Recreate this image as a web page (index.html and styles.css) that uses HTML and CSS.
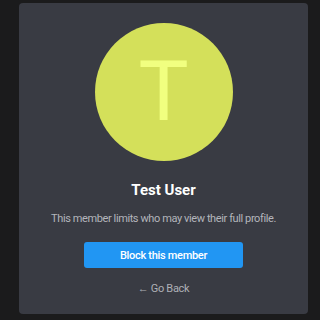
FILE: index.html
```html
<!DOCTYPE html>
<html>
<head>
  <link rel="stylesheet" href="styles.css">
</head>
<body>
  <div class="card">
    <div class="avatar">T</div>
    <h2 class="name">Test User</h2>
    <p class="notice">This member limits who may view their full profile.</p>
    <button class="block-btn">Block this member</button>
    <a class="back-link" href="#">&larr; Go Back</a>
  </div>
</body>
</html>
```

FILE: styles.css
```css
body {
  margin: 0;
  background: #1b1b1c;
  font-family: Roboto, "Liberation Sans", sans-serif;
}
.card {
  width: 289px;
  height: 311px;
  margin: 3px 0 0 19px;
  background: #393b43;
  border-radius: 4px;
  display: flex;
  flex-direction: column;
  align-items: center;
  box-sizing: border-box;
  padding-top: 20px;
}
.avatar {
  width: 138px;
  height: 138px;
  border-radius: 50%;
  background: #d4e05a;
  color: #f1ff80;
  font-size: 84px;
  font-weight: 400;
  display: flex;
  align-items: center;
  justify-content: center;
  line-height: 1;
}
.name {
  margin: 20px 0 0;
  font-size: 15px;
  font-weight: bold;
  color: #fff;
}
.notice {
  margin: 13px 0 0;
  font-size: 11px;
  letter-spacing: -0.4px;
  color: #b3b5bb;
}
.block-btn {
  margin-top: 17px;
  width: 159px;
  height: 26px;
  background: #2196f3;
  color: white;
  border: none;
  border-radius: 3px;
  font-family: inherit;
  font-size: 11px;
  letter-spacing: -0.3px;
  font-weight: 500;
  cursor: pointer;
}
.back-link {
  margin-top: 14px;
  font-size: 11px;
  letter-spacing: -0.3px;
  color: #aeb0b6;
  text-decoration: none;
}
```
